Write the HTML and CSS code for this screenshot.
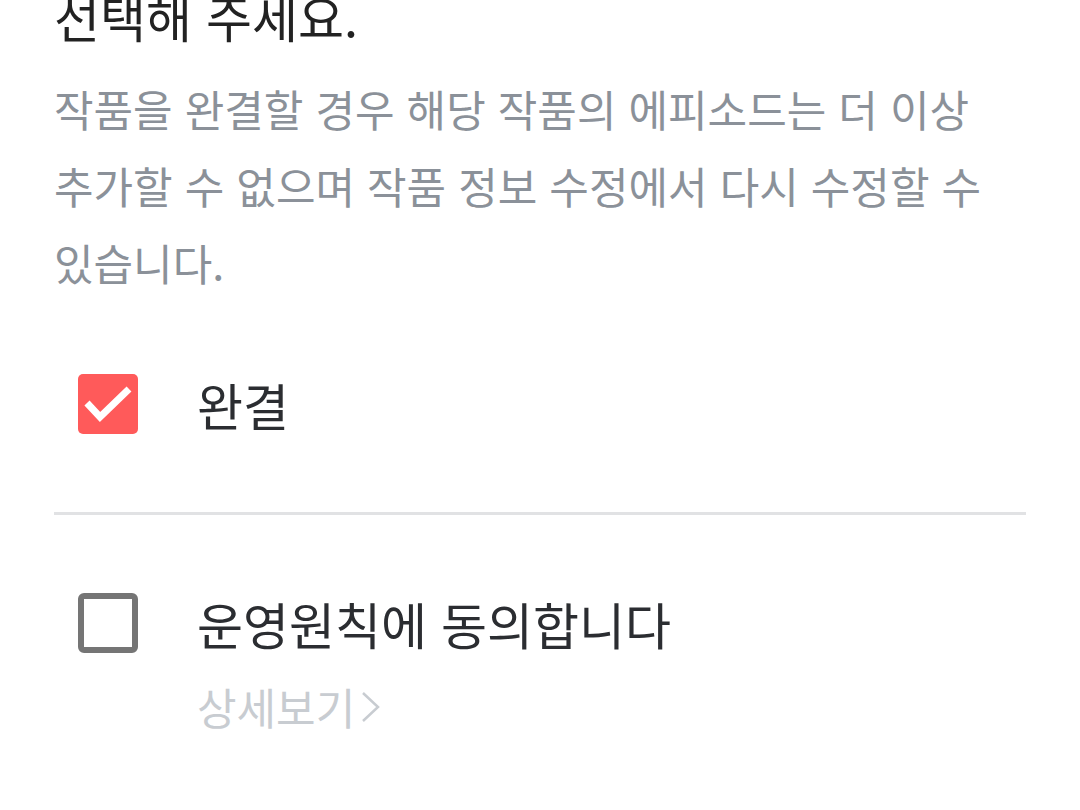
FILE: index.html
```html
<!DOCTYPE html>
<html lang="ko">
<head>
    <meta charset="UTF-8">
    <meta name="viewport" content="width=device-width, initial-scale=1.0">
    <title>작품 완결</title>
    <link rel="stylesheet" href="styles.css">
</head>
<body>
    <div class="page">
        <h2 class="title">선택해 주세요.</h2>
        <p class="desc">작품을 완결할 경우 해당 작품의 에피소드는 더 이상 추가할 수 없으며 작품 정보 수정에서 다시 수정할 수 있습니다.</p>

        <!-- 완결 체크 -->
        <label class="check-row">
            <span class="box checked">
                <svg viewBox="0 0 60 60" width="60" height="60">
                    <path d="M9 29 L22 43 L51 15" fill="none" stroke="#fff" stroke-width="7"/>
                </svg>
            </span>
            <span class="label">완결</span>
        </label>

        <div class="divider"></div>

        <!-- 운영원칙 동의 -->
        <label class="check-row agree">
            <span class="box"></span>
            <span class="label">운영원칙에 동의합니다</span>
        </label>
        <a href="#policy" class="more">상세보기<svg class="chev" viewBox="0 0 20 30" width="20" height="30"><path d="M2 1 L17 15 L2 29" fill="none" stroke="#c8ccd1" stroke-width="2.5"/></svg></a>
    </div>
</body>
</html>
```

FILE: styles.css
```css
/* 기본 스타일 */
body {
    margin: 0;
    padding: 0;
    background-color: #fff;
    font-family: "Noto Sans CJK KR", "Noto Sans", sans-serif;
}
.page {
    padding: 0 54px;
    display: flex;
    flex-direction: column;
}
.title {
    margin: -14px 0 0;
    font-size: 50px;
    font-weight: 400;
    line-height: 60px;
    color: #222;
}
.desc {
    margin: 24px 0 0;
    font-size: 43px;
    line-height: 77px;
    color: #8b9199;
    word-break: keep-all; /* 단어 단위 줄바꿈 */
}
.check-row {
    display: flex;
    align-items: center;
    gap: 59px;
    padding-left: 24px;
    margin-top: 73px;
    height: 60px;
}
.box {
    width: 60px;
    height: 60px;
    box-sizing: border-box;
    border: 6px solid #757575;
    border-radius: 6px;
    flex-shrink: 0;
}
.box.checked {
    border: none;
    background-color: #ff5a5a;
    border-radius: 5px;
}
.box svg {
    display: block;
}
.label {
    font-size: 50px;
    color: #2b2d31;
}
.divider {
    height: 3px;
    background-color: #e1e2e4;
    margin-top: 78px;
}
.agree {
    margin-top: 78px;
}
.more {
    margin: 25px 0 0 143px;
    font-size: 43px;
    line-height: 56px;
    color: #c8ccd1;
    text-decoration: none;
    display: flex;
    align-items: center;
}
.chev {
    margin-left: 6px;
    margin-top: 2px;
}
```
